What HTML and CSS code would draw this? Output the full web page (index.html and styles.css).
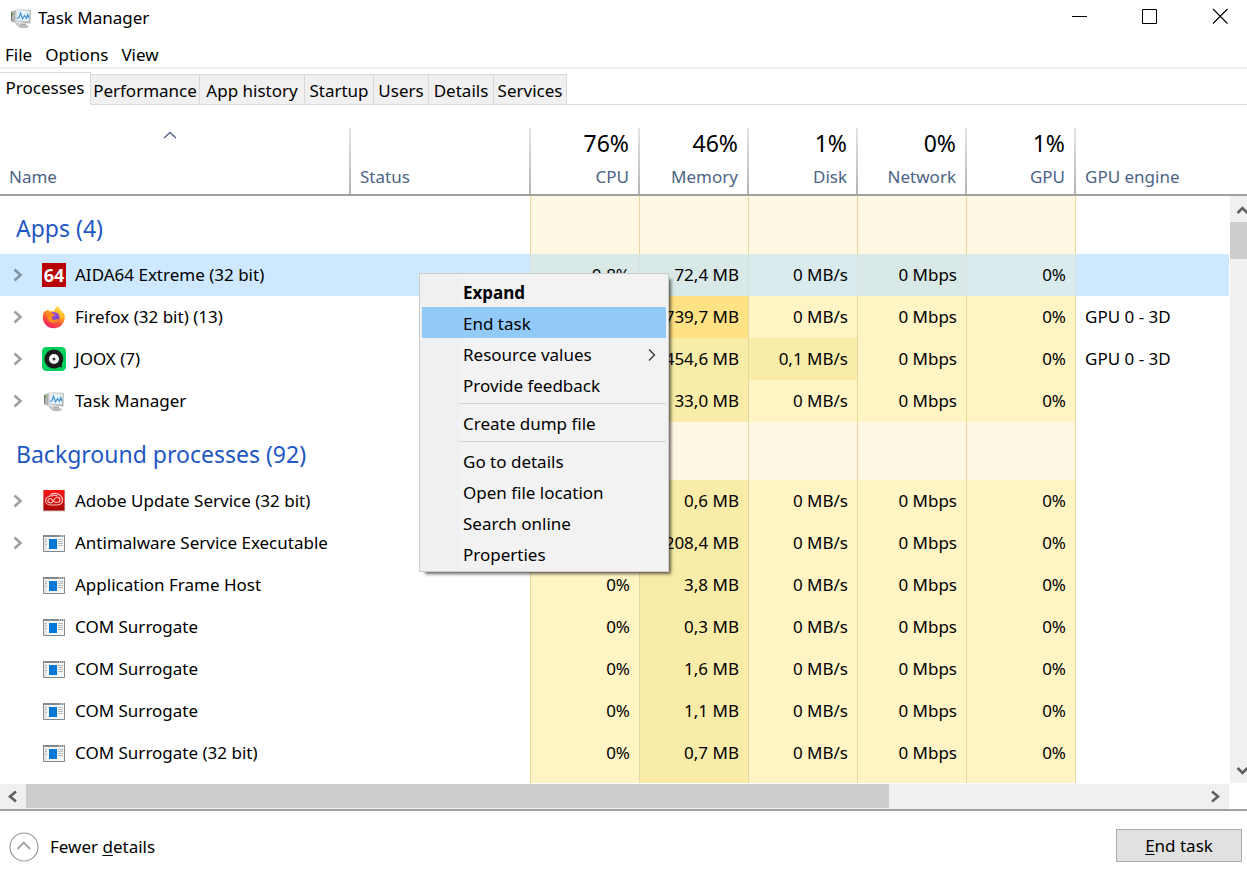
FILE: index.html
```html
<!DOCTYPE html>
<html lang="en">
<head>
<meta charset="utf-8">
<title>Task Manager</title>
<link rel="stylesheet" href="styles.css">
</head>
<body>
<svg class="sprite" aria-hidden="true">
  <defs>
    <linearGradient id="ff-body" x1="0.8" y1="0" x2="0.3" y2="1"><stop offset="0" stop-color="#fff04a"/><stop offset="0.4" stop-color="#ffa324"/><stop offset="0.7" stop-color="#ff4f3c"/><stop offset="1" stop-color="#ee1f68"/></linearGradient>
    <linearGradient id="ff-globe" x1="0" y1="0" x2="0" y2="1"><stop offset="0" stop-color="#a447e8"/><stop offset="1" stop-color="#5a49c9"/></linearGradient>
    <linearGradient id="cc-red" x1="0" y1="0" x2="0" y2="1"><stop offset="0" stop-color="#ff1414"/><stop offset="1" stop-color="#a50808"/></linearGradient>
    <linearGradient id="pc-grey" x1="0" y1="0" x2="1" y2="1"><stop offset="0" stop-color="#ededed"/><stop offset="1" stop-color="#a9a9a9"/></linearGradient>
  </defs>
  <symbol id="i-chev" viewBox="0 0 10 14"><path d="M1.500 1.500 7.500 7l-6 5.500" fill="none" stroke="currentColor" stroke-width="2.600"/></symbol>
  <symbol id="i-tm" viewBox="0 0 24 24">
    <path d="M2 5.500 7 4v13l-5-1.500z" fill="#b4b4b4"/><path d="M2.500 6v9" stroke="#777" stroke-width="1"/><path d="M3 7h1.500v2H3z" fill="#5fae2e"/>
    <path d="M6 16.500l9 1.500v3l-7-1z" fill="#c9c9c9"/>
    <path d="M7 2.500 22 4l-.6 13.500L6 16z" fill="url(#pc-grey)"/>
    <path d="M8.500 4.500 20.300 5.500 20 15.600 7.600 14.500z" fill="#e6f3fc"/>
    <path d="M8 12.500l2-1 1.500-4.500 2 6 2-3.500 2 3 1.200-4 1.300 3.500" fill="none" stroke="#3a8fcc" stroke-width="1.100"/>
    <path d="M12 17.500h5v2.500h-5z" fill="#aaa"/><ellipse cx="14.500" cy="20.500" rx="5" ry="1.700" fill="#bcbcbc"/>
  </symbol>
  <symbol id="i-ff" viewBox="0 0 24 24">
    <path d="M3 5.500 4.500 7 5.500 4l2 2.500c1.500-.6 3-.6 4.500-.1C12.500 4 14 2 16.500.8c.2 2 1.200 3.400 2.700 4.800 1 .8 1.500 1.700 1.800 2.400l.8-.4c1 2.400 1.400 5 .7 7.500C21.300 20 17 23.300 12 23.300 5.500 23.300.8 18.500.8 12.300.8 9.600 1.500 7.300 3 5.500z" fill="url(#ff-body)"/>
    <circle cx="12" cy="12.300" r="5.400" fill="url(#ff-globe)"/>
    <path d="M3.500 6.500c2.500-.8 5.500-.2 7 2.500l2.800.3c-.1 1.500-2.500 2-3.400 2.600-.4 2 1 3.100 3.100 2.800 1.500-.2 2.500-1 3.500-.3-1 2.600-4 4.100-7 3.100C6 16.500 4.500 13 5.500 10z" fill="#ff8a1e"/>
    <path d="M14.500 5.500c4 1.500 5.500 5.500 4 9.500 2.500-2.500 2.700-7-.5-10z" fill="#ffcf37"/>
  </symbol>
  <symbol id="i-joox" viewBox="0 0 24 24"><rect width="24" height="24" rx="4.500" fill="#00cf5d"/><path d="M12 2.500a9.500 9.500 0 1 0 5 17.600l3 .2-.3-3.200A9.500 9.500 0 0 0 12 2.500z" fill="#1b1b1b"/><circle cx="12" cy="12" r="5" fill="#fff"/><circle cx="12" cy="12" r="1.500" fill="#333"/></symbol>
  <symbol id="i-cc" viewBox="0 0 24 24"><path d="M1 1h22v21.500H1z" fill="#d8c0c0"/><path d="M1.500 1h21v20.500h-21z" fill="url(#cc-red)"/><g fill="none" stroke="#ffc9c4" stroke-width="1.100"><path d="M7.500 7.500C9 4.800 12 4 14.500 4.600c3.500.5 6 3.300 6 6 0 3.500-2.500 5.400-5.500 5.400H8.500c-3 0-4.900-2-4.900-4.300 0-2.200 1.700-4 3.900-4.200z"/><path d="M14.500 13.500c-2.500 0-3.500-2-5-3.500-1.600-1.200-3.600-.2-3.600 1.700 0 1.500 1.200 2.200 2.600 2.200 3.500 0 3.200-5.600 6.500-5.600 1.800 0 3 1.200 3 2.700s-1.500 2.500-3.500 2.500z"/><path d="M9.500 7.500c2-1.800 4.500-1.300 6-.6"/></g></symbol>
  <symbol id="i-exe" viewBox="0 0 24 24"><path d="M1.500 4.500h21v16h-21z" fill="#f6f7f8" stroke="#85898c"/><path d="M2 7h3v13H2z" fill="#e4e6e8"/><path d="M1 4h22v2H1z" fill="#85898c"/><path d="M17 4.500h1v1h-1zM19 4.500h1v1h-1zM21 4.500h1v1h-1z" fill="#fff"/><path d="M7 8h8v10H7z" fill="#0078d7"/><path d="M3 8.500h2M3 10.500h2M3 13.500h2M16 8.500h5M16 10.500h5M16 12.500h5M16 14.500h5" stroke="#a9acaf" stroke-width=".8"/></symbol>
</svg>

<header class="titlebar">
  <h1 class="title"><svg class="icon"><use href="#i-tm"/></svg>Task Manager</h1>
  <div class="window-buttons">
    <button class="wbtn" aria-label="Minimize"><svg width="16" height="16"><path d="M0 8.500h15" stroke="#000"/></svg></button>
    <button class="wbtn" aria-label="Maximize"><svg width="16" height="16"><path d="M.5 1.500h14v14H.5z" fill="none" stroke="#000"/></svg></button>
    <button class="wbtn" aria-label="Close"><svg width="16" height="16"><path d="M1 1l14.500 14.500M15.500 1 1 15.500" stroke="#000" stroke-width="1.100"/></svg></button>
  </div>
</header>
<nav class="menubar"><button>File</button><button>Options</button><button>View</button></nav>
<div class="tabs" role="tablist">
  <button class="tab active" role="tab" aria-selected="true">Processes</button>
  <button class="tab t-perf" role="tab">Performance</button>
  <button class="tab t-hist" role="tab">App history</button>
  <button class="tab t-start" role="tab">Startup</button>
  <button class="tab t-users" role="tab">Users</button>
  <button class="tab t-details" role="tab">Details</button>
  <button class="tab t-services" role="tab">Services</button>
</div>

<main class="pane">
  <div class="view">
  <table class="procs">
    <colgroup><col class="c-name"><col class="c-status"><col class="c-num"><col class="c-num"><col class="c-num"><col class="c-num"><col class="c-num"><col></colgroup>
    <thead>
      <tr>
        <th class="left"><svg class="sort" width="14" height="8"><path d="M1 7l6-5.500L13 7" fill="none" stroke="#5a6488" stroke-width="1.400"/></svg><span class="label">Name</span></th>
        <th class="left"><span class="label">Status</span></th>
        <th><span class="pct">76%</span><span class="label">CPU</span></th>
        <th><span class="pct">46%</span><span class="label">Memory</span></th>
        <th><span class="pct">1%</span><span class="label">Disk</span></th>
        <th><span class="pct">0%</span><span class="label">Network</span></th>
        <th><span class="pct">1%</span><span class="label">GPU</span></th>
        <th class="left last"><span class="label">GPU engine</span></th>
      </tr>
    </thead>
    <tbody>
      <tr class="group"><th colspan="2">Apps (4)</th><td></td><td></td><td></td><td></td><td></td><td></td></tr>
      <tr class="selected"><td><div class="name"><button class="exp" aria-label="Expand"><svg><use href="#i-chev"/></svg></button><span class="icon aida">64</span>AIDA64 Extreme (32 bit)</div></td><td></td><td>0,8%</td><td>72,4 MB</td><td>0 MB/s</td><td>0 Mbps</td><td>0%</td><td></td></tr>
      <tr><td><div class="name"><button class="exp" aria-label="Expand"><svg><use href="#i-chev"/></svg></button><svg class="icon"><use href="#i-ff"/></svg>Firefox (32 bit) (13)</div></td><td></td><td></td><td class="hot">739,7 MB</td><td>0 MB/s</td><td>0 Mbps</td><td>0%</td><td>GPU 0 - 3D</td></tr>
      <tr><td><div class="name"><button class="exp" aria-label="Expand"><svg><use href="#i-chev"/></svg></button><svg class="icon"><use href="#i-joox"/></svg>JOOX (7)</div></td><td></td><td></td><td>454,6 MB</td><td class="warm">0,1 MB/s</td><td>0 Mbps</td><td>0%</td><td>GPU 0 - 3D</td></tr>
      <tr><td><div class="name"><button class="exp" aria-label="Expand"><svg><use href="#i-chev"/></svg></button><svg class="icon"><use href="#i-tm"/></svg>Task Manager</div></td><td></td><td></td><td>33,0 MB</td><td>0 MB/s</td><td>0 Mbps</td><td>0%</td><td></td></tr>
      <tr class="group"><th colspan="2">Background processes (92)</th><td></td><td></td><td></td><td></td><td></td><td></td></tr>
      <tr><td><div class="name"><button class="exp" aria-label="Expand"><svg><use href="#i-chev"/></svg></button><svg class="icon"><use href="#i-cc"/></svg>Adobe Update Service (32 bit)</div></td><td></td><td></td><td>0,6 MB</td><td>0 MB/s</td><td>0 Mbps</td><td>0%</td><td></td></tr>
      <tr><td><div class="name"><button class="exp" aria-label="Expand"><svg><use href="#i-chev"/></svg></button><svg class="icon"><use href="#i-exe"/></svg>Antimalware Service Executable</div></td><td></td><td></td><td>208,4 MB</td><td>0 MB/s</td><td>0 Mbps</td><td>0%</td><td></td></tr>
      <tr><td><div class="name leaf"><svg class="icon"><use href="#i-exe"/></svg>Application Frame Host</div></td><td></td><td>0%</td><td>3,8 MB</td><td>0 MB/s</td><td>0 Mbps</td><td>0%</td><td></td></tr>
      <tr><td><div class="name leaf"><svg class="icon"><use href="#i-exe"/></svg>COM Surrogate</div></td><td></td><td>0%</td><td>0,3 MB</td><td>0 MB/s</td><td>0 Mbps</td><td>0%</td><td></td></tr>
      <tr><td><div class="name leaf"><svg class="icon"><use href="#i-exe"/></svg>COM Surrogate</div></td><td></td><td>0%</td><td>1,6 MB</td><td>0 MB/s</td><td>0 Mbps</td><td>0%</td><td></td></tr>
      <tr><td><div class="name leaf"><svg class="icon"><use href="#i-exe"/></svg>COM Surrogate</div></td><td></td><td>0%</td><td>1,1 MB</td><td>0 MB/s</td><td>0 Mbps</td><td>0%</td><td></td></tr>
      <tr><td><div class="name leaf"><svg class="icon"><use href="#i-exe"/></svg>COM Surrogate (32 bit)</div></td><td></td><td>0%</td><td>0,7 MB</td><td>0 MB/s</td><td>0 Mbps</td><td>0%</td><td></td></tr>
      <tr><td></td><td></td><td></td><td></td><td></td><td></td><td></td><td></td></tr>
    </tbody>
  </table>
  <div class="side">
    <div class="side-head"></div>
    <div class="vscroll">
      <svg class="arrow"><path d="M7.500 17l5-5 5 5" fill="none" stroke="#606060" stroke-width="2.600"/></svg>
      <div class="vtrack"><div class="vthumb"></div></div>
      <svg class="arrow"><path d="M7.500 11l5 5 5-5" fill="none" stroke="#606060" stroke-width="2.600"/></svg>
    </div>
  </div>
  </div>
  <div class="hscroll">
    <svg class="arrow"><path d="M16 7.500l-6 5 6 5" fill="none" stroke="#606060" stroke-width="2.600"/></svg>
    <div class="htrack"><div class="hthumb"></div></div>
    <svg class="arrow"><path d="M9 7.500l6 5-6 5" fill="none" stroke="#606060" stroke-width="2.600"/></svg>
  </div>
</main>

<footer class="footer">
  <button class="fewer"><svg width="30" height="30"><circle cx="15" cy="15" r="14" fill="none" stroke="#999" stroke-width="1.200"/><path d="M8.500 17l6.300-6.500 6.300 6.500" fill="none" stroke="#a2a2a2" stroke-width="1.800"/></svg><span>Fewer <u>d</u>etails</span></button>
  <button class="end"><span><u>E</u>nd task</span></button>
</footer>

<div class="context" role="menu">
  <button role="menuitem" class="default">Expand</button>
  <button role="menuitem" class="hover">End task</button>
  <button role="menuitem">Resource values<svg width="8" height="14"><path d="M1 1.500 6.500 7 1 12.500" fill="none" stroke="#333" stroke-width="1.300"/></svg></button>
  <button role="menuitem">Provide feedback</button>
  <hr>
  <button role="menuitem">Create dump file</button>
  <hr>
  <button role="menuitem">Go to details</button>
  <button role="menuitem">Open file location</button>
  <button role="menuitem">Search online</button>
  <button role="menuitem">Properties</button>
</div>
</body>
</html>
```
FILE: styles.css
```css
* { box-sizing: border-box; }
body {
  margin: 0;
  height: 100vh;
  display: flex;
  flex-direction: column;
  background: #fff;
  color: #000;
  font-family: "Noto Sans", "Open Sans", sans-serif;
  font-size: 17px;
  line-height: 24px;
  overflow: hidden;
}
button {
  margin: 0;
  padding: 0;
  border: 0;
  background: none;
  color: inherit;
  font: inherit;
  white-space: nowrap;
}
svg { display: block; flex: none; }
u { text-underline-offset: 2px; text-decoration-thickness: 1px; }
.sprite { position: absolute; width: 0; height: 0; }
.icon { width: 24px; height: 24px; flex: none; }
.aida { background: #b80000; color: #fff; font-size: 18px; font-weight: 700; text-align: center; }

.titlebar { display: flex; justify-content: space-between; height: 36px; flex: none; }
.title { display: flex; align-items: center; gap: 5px; margin: 0; padding-left: 9px; font-size: 17px; font-weight: 400; }
.window-buttons { display: flex; gap: 16px; }
.wbtn { width: 54px; display: flex; justify-content: center; align-items: center; padding-bottom: 4px; }

.menubar { display: flex; gap: 13px; padding: 7px 5px 0; height: 33px; flex: none; border-bottom: 2px solid #f0f0f0; }
.menubar button { height: 24px; }

.tabs { display: flex; align-items: flex-end; height: 36px; flex: none; box-shadow: inset 0 -1px #d9d9d9; }
.tab { height: 31px; padding-top: 2px; border: 1px solid #d9d9d9; border-left: 0; background: #f0f0f0; }
.tab.active { width: 91px; height: 33px; padding: 0 0 1px; background: #fff; border-bottom-color: #fff; }
.t-perf { width: 109px; }
.t-hist { width: 105px; }
.t-start { width: 69px; }
.t-users { width: 55px; }
.t-details { width: 65px; }
.t-services { width: 73px; }

.pane { flex: 1; min-height: 0; display: flex; flex-direction: column; border-bottom: 2px solid #a0a0a0; }
.view { flex: 1; min-height: 0; display: flex; align-items: stretch; overflow: hidden; }
.procs { flex: 1; align-self: flex-start; min-width: 0; table-layout: fixed; border-collapse: separate; border-spacing: 0; }
.c-name { width: 351px; }
.c-status { width: 180px; }
.c-num { width: 109px; }
th { font-weight: 400; }
thead th {
  height: 91px;
  padding: 0 11px 5px 0;
  vertical-align: bottom;
  text-align: right;
  border-bottom: 2px solid #a0a0a0;
  background: linear-gradient(#e6e6e6, #b4b4b4) right bottom / 2px 66px no-repeat;
}
thead th.left { text-align: left; padding: 0 0 5px 9px; }
thead th.last { background: none; }
.label { display: block; color: #4c6484; }
.pct { display: block; font-size: 23px; line-height: 32px; margin-bottom: 6px; }
.sort { margin: 0 auto 26px 154px; }
td { height: 42px; padding: 0 9px 0 0; text-align: right; background: #fff4c4; border-right: 1px solid #e8d59b; white-space: nowrap; }
td:first-child, td:nth-child(2), td:last-child { text-align: left; background: #fff; border-right: 0; }
td:nth-child(2) { border-right: 1px solid #e8d59b; }
td:last-child { padding-left: 9px; }
td:nth-child(4), td.warm { background: #f9eca8; }
td.hot { background: #ffe283; }
.group th { height: 58px; padding: 6px 0 0 16px; text-align: left; font-size: 23px; color: #1f57c4; border-right: 1px solid #e8d59b; }
.group td:nth-child(n) { height: 58px; background: #fff8e2; border-right: 1px solid #e8d59b; }
.group td:last-child:nth-child(n) { background: #fff; border-right: 0; }
.selected td { background: #daebee; border-color: #d8e0e0; }
.selected td:first-child, .selected td:nth-child(2), .selected td:last-child { background: #cde8ff; border-color: #d8e0e0; }
.selected td:nth-child(3), .selected td:nth-child(4), .selected td:nth-child(6) { background: #d8e9e7; }
.name { display: flex; align-items: center; gap: 9px; padding-left: 12px; }
.name.leaf { padding-left: 42px; }
.exp { width: 21px; height: 24px; display: flex; align-items: center; color: #a0a0a0; }
.exp svg { width: 12px; height: 14px; }
.selected .exp { color: #7f95a6; }

.side { width: 18px; flex: none; display: flex; flex-direction: column; overflow: hidden; }
.side-head { height: 91px; flex: none; border-bottom: 2px solid #a0a0a0; }
.vscroll { flex: 1; width: 26px; margin-left: 1px; display: flex; flex-direction: column; background: #f0f0f0; }
.arrow { width: 26px; height: 26px; }
.vtrack { flex: 1; }
.vthumb { height: 37px; background: #cdcdcd; }
.hscroll { flex: none; display: flex; height: 25px; margin: 1px 18px 0 0; background: #f0f0f0; }
.htrack { flex: 1; }
.hthumb { width: 73.3%; height: 24px; background: #cdcdcd; }

.footer { flex: none; display: flex; justify-content: space-between; align-items: center; height: 68px; padding: 0 5px 0 9px; }
.fewer { display: flex; align-items: center; gap: 11px; padding-top: 4px; }
.end { width: 126px; height: 33px; padding-top: 2px; border: 1px solid #adadad; background: #e1e1e1; }

.context {
  position: absolute;
  left: 419px;
  top: 273px;
  width: 250px;
  padding: 2px;
  border: 1px solid #ccc;
  background: linear-gradient(90deg, #f0f0f0 39px, #f2f2f2 39px);
  box-shadow: 4px 4px 3px -2px rgba(0, 0, 0, 0.6);
}
.context button { display: flex; align-items: center; justify-content: space-between; width: 100%; height: 31px; padding: 2px 10px 0 41px; }
.context .default { font-weight: 700; }
.context .hover { background: #91c9f7; }
.context hr { height: 1px; margin: 3px 0 3px 37px; border: 0; background: #d4d4d4; }
```
